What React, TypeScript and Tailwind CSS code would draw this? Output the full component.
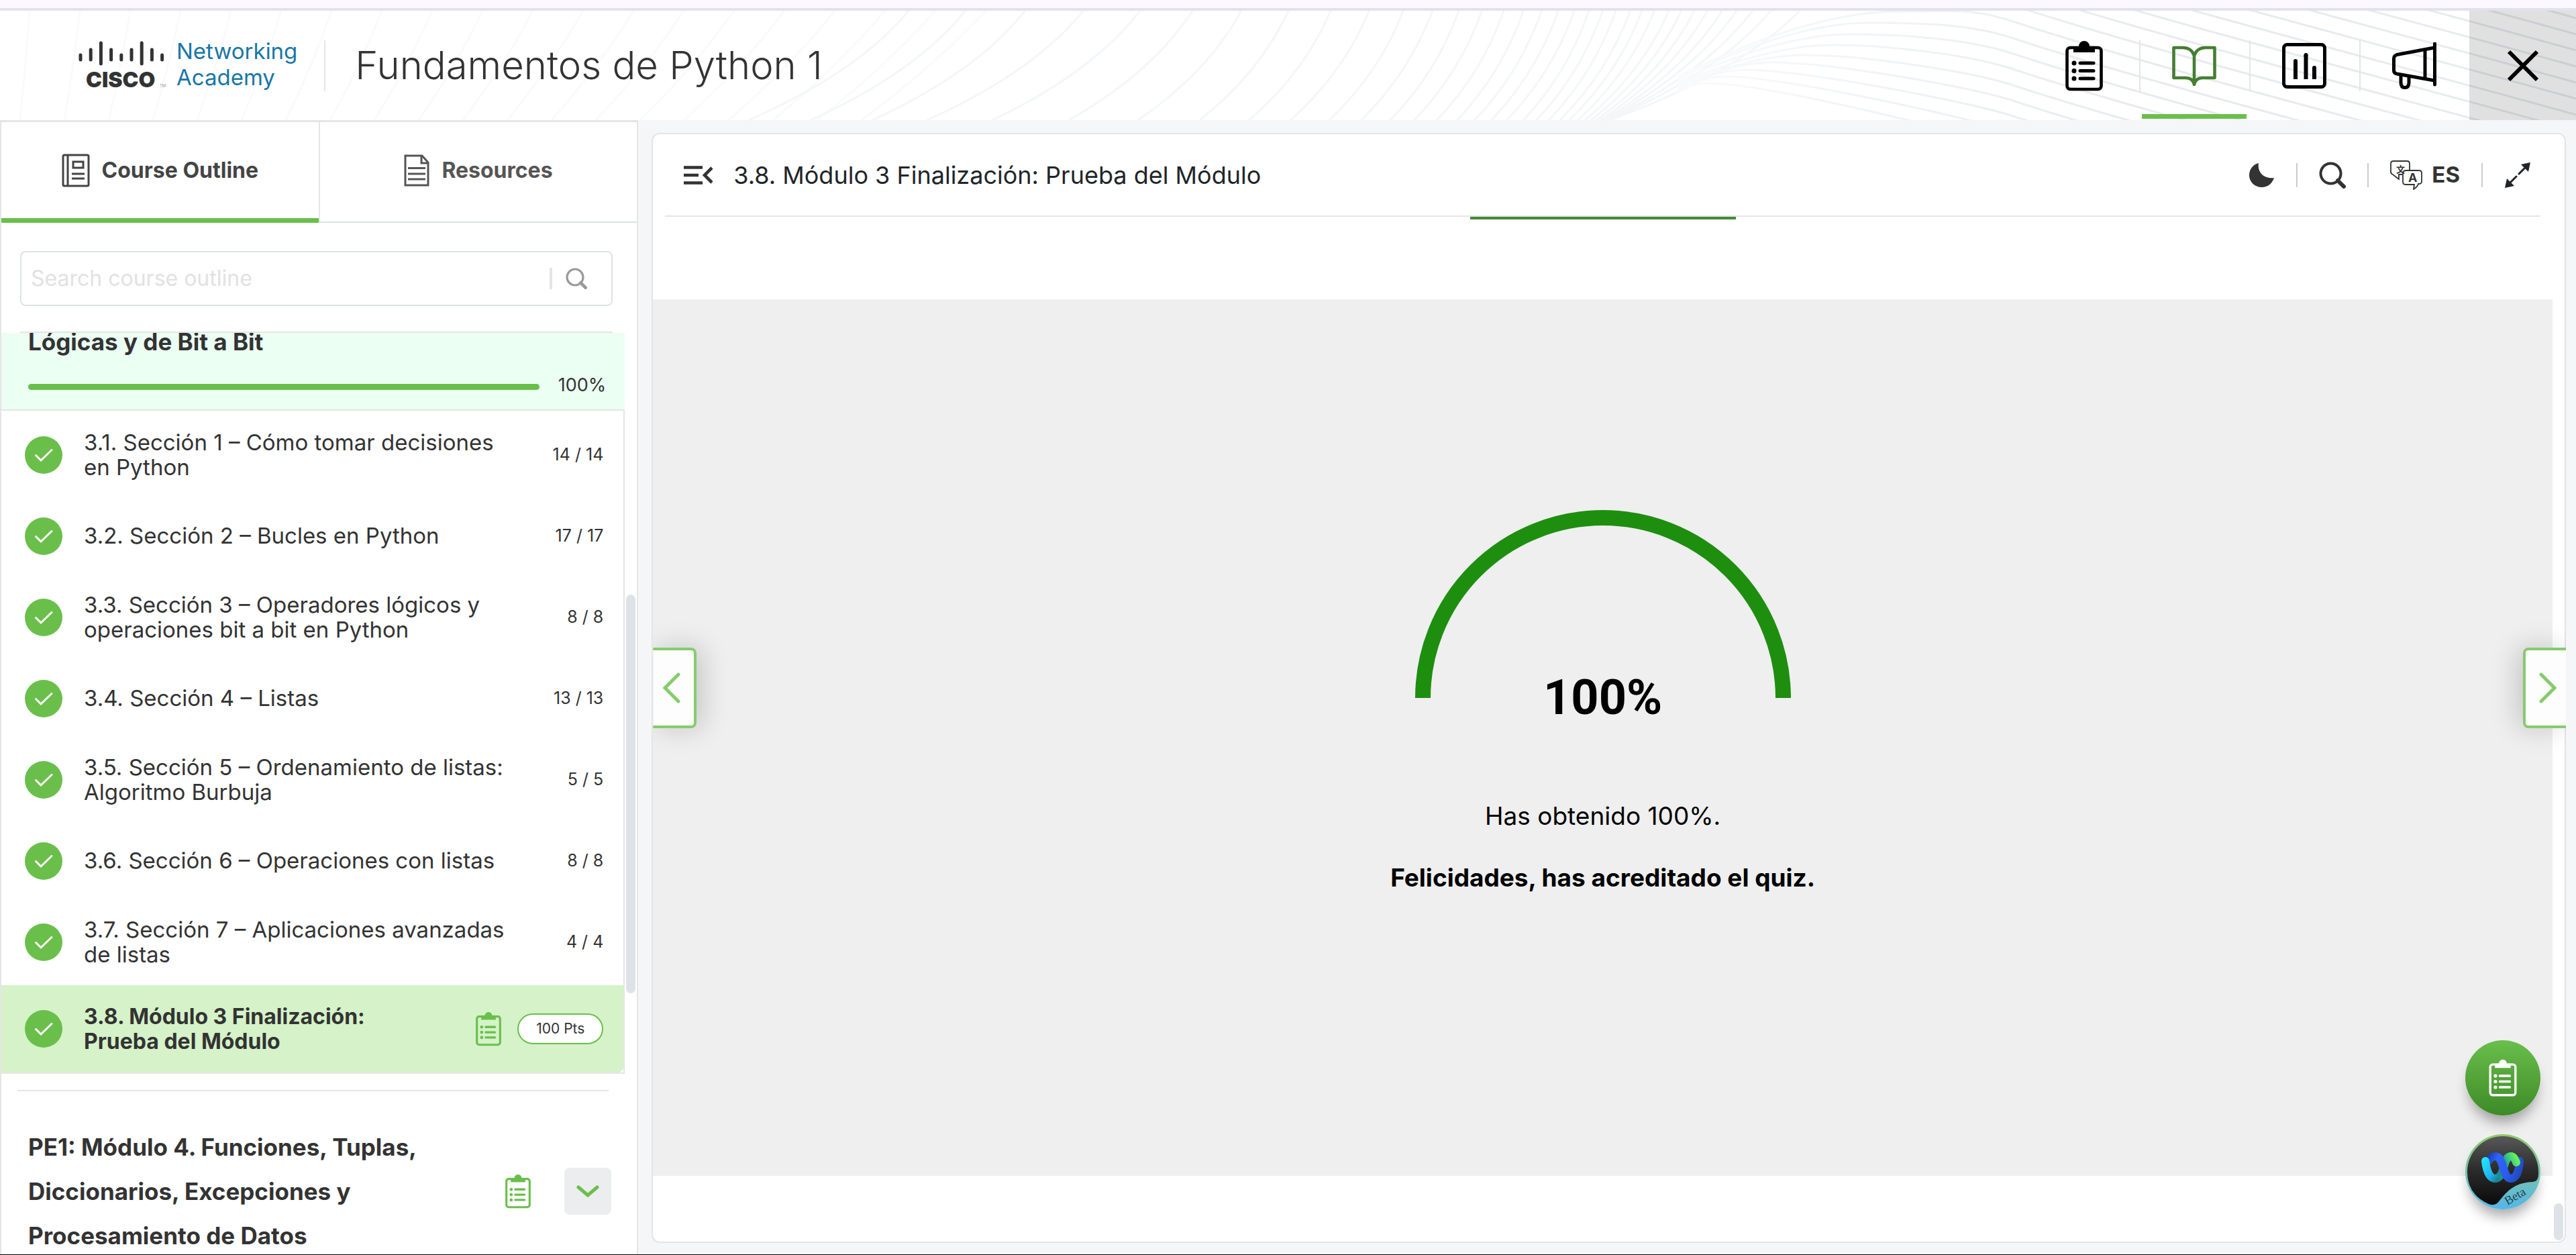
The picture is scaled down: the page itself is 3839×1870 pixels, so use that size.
import React from "react";

type IconProps = { className?: string };

function ClipboardIcon({ className }: IconProps) {
  return (
    <svg viewBox="0 0 56 76" className={className} fill="none" stroke="currentColor" aria-hidden="true">
      <rect x="2.5" y="11" width="51" height="62" rx="5" strokeWidth="4.6" />
      <path d="M12 9h8a8 8 0 0 1 16 0h8v9H12z" fill="currentColor" stroke="none" />
      <g strokeWidth="5" strokeLinecap="round">
        <path d="M22 34h20M22 45.500h20M22 57h20" />
      </g>
      <g fill="currentColor" stroke="none">
        <circle cx="13" cy="34" r="3.500" />
        <circle cx="13" cy="45.500" r="3.500" />
        <circle cx="13" cy="57" r="3.500" />
      </g>
    </svg>
  );
}

function BookIcon({ className }: IconProps) {
  return (
    <svg viewBox="0 0 66 60" className={className} fill="none" stroke="currentColor" strokeWidth="4.6" aria-hidden="true">
      <path d="M33 15Q29 3 16 3H2.500V48H20Q31 48 33 58Q35 48 46 48H63.500V3H50Q37 3 33 15V55" strokeLinejoin="round" />
    </svg>
  );
}

function ChartIcon({ className }: IconProps) {
  return (
    <svg viewBox="0 0 66 68" className={className} fill="none" stroke="currentColor" strokeWidth="5" aria-hidden="true">
      <rect x="2.500" y="2.500" width="61" height="63" rx="5" />
      <path d="M20 27V54M35.500 18V54M48 37V54" strokeWidth="6" />
      <path d="M20 27v1M35.500 18v1M48 37v1" strokeWidth="6" strokeLinecap="round" />
    </svg>
  );
}

function MegaphoneIcon({ className }: IconProps) {
  return (
    <svg viewBox="0 0 66 70" className={className} fill="none" stroke="currentColor" strokeWidth="5" aria-hidden="true">
      <path d="M63.500 2V63" strokeLinecap="round" />
      <path d="M63 8L7 18.500Q2.500 20 2.500 24V42Q2.500 46 7 47L63 57" />
      <path d="M49 11V54M13 48V60Q13 67.500 19 67.500Q25 67.500 25 60V50" />
    </svg>
  );
}

function CloseIcon({ className }: IconProps) {
  return (
    <svg viewBox="0 0 48 48" className={className} stroke="currentColor" strokeWidth="6" aria-hidden="true">
      <path d="M3 3L45 45M45 3L3 45" />
    </svg>
  );
}

function OutlineIcon({ className }: IconProps) {
  return (
    <svg viewBox="0 0 42 50" className={className} fill="none" stroke="currentColor" strokeWidth="3" aria-hidden="true">
      <rect x="2" y="2" width="38" height="46" rx="2" />
      <path d="M9 2V48" />
      <rect x="17" y="12" width="15" height="9" />
      <path d="M15 30H34M15 37H34" />
    </svg>
  );
}

function FileIcon({ className }: IconProps) {
  return (
    <svg viewBox="0 0 38 48" className={className} fill="none" stroke="currentColor" strokeWidth="3" aria-hidden="true">
      <path d="M2 2H27L36 12V46H2Z" />
      <path d="M26 2V13H36M6 20.500H32M6 29H32M6 37H32" />
    </svg>
  );
}

function SearchIcon({ className }: IconProps) {
  return (
    <svg viewBox="0 0 40 40" className={className} fill="none" stroke="currentColor" strokeWidth="4" aria-hidden="true">
      <circle cx="17.500" cy="17.500" r="15" />
      <path d="M28 28L37 37" strokeWidth="6" strokeLinecap="round" />
    </svg>
  );
}

function CollapseIcon({ className }: IconProps) {
  return (
    <svg viewBox="0 0 44 28" className={className} fill="none" stroke="currentColor" strokeWidth="4.600" aria-hidden="true">
      <path d="M0 2.500H28M0 14H22M0 25.500H28M42 3L31 14L42 25" />
    </svg>
  );
}

function MoonIcon({ className }: IconProps) {
  return (
    <svg viewBox="0 0 38 36" className={className} fill="currentColor" aria-hidden="true">
      <path d="M14 0C12 12 20 24 37 22C34 31 27 36 19 36C8 36 0 28 0 18C0 9 6 2 14 0Z" />
    </svg>
  );
}

function TranslateIcon({ className }: IconProps) {
  return (
    <svg viewBox="0 0 48 44" className={className} fill="none" stroke="currentColor" strokeWidth="1.800" aria-hidden="true">
      <path d="M18 21H13V28L4 21Q1 20 1 17V5Q1 1 5 1H25Q29 1 29 5V15" />
      <path d="M24 15H43Q47 15 47 19V31Q47 35 43 35H42Q41 39 35 43L36 36H23Q19 36 19 32V19Q19 15 24 15Z" />
      <text x="9" y="18" fontSize="13" fontWeight="700" fontFamily="'Noto Sans CJK SC', sans-serif" fill="currentColor" stroke="none">文</text>
      <text x="27" y="32" fontSize="18" fontFamily="Inter, sans-serif" fill="currentColor" stroke="none">A</text>
    </svg>
  );
}

function ExpandIcon({ className }: IconProps) {
  return (
    <svg viewBox="0 0 40 40" className={className} fill="currentColor" aria-hidden="true">
      <path d="M39 1L25 4L36 15ZM1 39L4 25L15 36Z" />
      <path d="M32 8L22 18M18 22L8 32" stroke="currentColor" strokeWidth="3" strokeLinecap="round" />
    </svg>
  );
}

function CheckBadge() {
  return (
    <svg viewBox="0 0 56 56" className="size-14 shrink-0" role="img" aria-label="Completed">
      <circle cx="28" cy="28" r="28" fill="#6abf4b" />
      <path d="M16.500 28.500L24 36L40 20.500" fill="none" stroke="#fff" strokeWidth="3" strokeLinecap="round" />
    </svg>
  );
}

function CiscoLogo() {
  const bars = [0, 1, 2, 1, 0, 1, 2, 1, 0];
  const spans = [
    [20, 29],
    [12, 29],
    [2, 35],
  ];
  return (
    <svg viewBox="0 0 132 76" className="h-[76px] w-[132px] shrink-0" role="img" aria-label="Cisco">
      <g stroke="#333" strokeWidth="5" strokeLinecap="round">
        {bars.map((b, i) => (
          <line key={i} x1={3 + i * 15.2} x2={3 + i * 15.2} y1={spans[b][0] + 2} y2={spans[b][1]} />
        ))}
      </g>
      <text x="11" y="70" fontSize="32" fontWeight="900" fontFamily="Inter, sans-serif" fill="#333">CISCO</text>
      <text x="121" y="70" fontSize="6" fontFamily="Inter, sans-serif" fill="#999">TM</text>
    </svg>
  );
}

function WebexIcon() {
  return (
    <svg viewBox="0 0 112 112" className="size-28" aria-hidden="true">
      <defs>
        <linearGradient id="rim" x1="0" y1="0" x2="0" y2="1">
          <stop offset="0" stopColor="#8fcb6b" />
          <stop offset="0.600" stopColor="#70c0b4" />
          <stop offset="1" stopColor="#54b6ea" />
        </linearGradient>
        <linearGradient id="disc" x1="0" y1="0" x2="0" y2="1">
          <stop offset="0" stopColor="#585858" />
          <stop offset="0.500" stopColor="#2b2b2b" />
          <stop offset="1" stopColor="#0a0a0a" />
        </linearGradient>
        <linearGradient id="cyan" gradientUnits="userSpaceOnUse" x1="28" y1="36" x2="58" y2="60">
          <stop offset="0" stopColor="#24e4fb" />
          <stop offset="0.600" stopColor="#1fb4f2" />
          <stop offset="1" stopColor="#157a80" />
        </linearGradient>
        <linearGradient id="green" gradientUnits="userSpaceOnUse" x1="56" y1="50" x2="78" y2="40">
          <stop offset="0" stopColor="#1c7a72" />
          <stop offset="0.500" stopColor="#37bf90" />
          <stop offset="1" stopColor="#62f25a" />
        </linearGradient>
        <linearGradient id="blue" gradientUnits="userSpaceOnUse" x1="32" y1="36" x2="84" y2="60">
          <stop offset="0" stopColor="#1a3fa8" />
          <stop offset="0.250" stopColor="#2f63fb" />
          <stop offset="0.650" stopColor="#2a5cf0" />
          <stop offset="1" stopColor="#2048b8" />
        </linearGradient>
      </defs>
      <circle cx="56" cy="56" r="56" fill="url(#rim)" />
      <path d="M3 56A53 53 0 0 1 109 56Q110 70 101 71C76 72 64 82 51 99Q45 108 35 104Q3 90 3 56Z" fill="url(#disc)" />
      <g fill="none" strokeWidth="12" strokeLinecap="round">
        <path d="M68 66C76 66 80 56 81 40" stroke="url(#blue)" />
        <path d="M44 66C52 66 55 58 57 50C60 38 63 33 68 33" stroke="#1f8f8c" />
        <path d="M57 50C60 38 63 33 68 33C72 33 74 37 76 42" stroke="url(#green)" />
        <path d="M34 40C38 34 41 33 45 33C52 33 54 42 57 51C60 61 63 66 68 66" stroke="url(#blue)" />
        <path d="M30 40C32 57 37 66 45 66" stroke="url(#cyan)" />
      </g>
      <text x="63" y="106" transform="rotate(-31 63 106)" fontSize="18" fontFamily="'Liberation Serif', serif" fill="#26404a">Beta</text>
    </svg>
  );
}

const waveTops = [50, 128, 210, 290, 368, 440, 507, 572, 630, 683, 730, 770, 806, 838, 868, 895, 920, 943, 965, 985, 1004, 1022, 1042, 1058, 1075, 1095, 1112, 1130, 1148, 1168, 1188, 1210, 1235, 1275];
const waveFeet = [-170, -85, 0, 75, 165, 270, 365, 450, 518, 575, 628, 672, 712, 745, 776, 804, 828, 851, 872, 895, 913, 930, 945, 958, 970, 980, 988, 995, 1000, 1004, 1007, 1010, 1012, 1014];
const crests = [
  [2829, 1, 16],
  [2785, 18, 41],
  [2758, 35, 64],
  [2731, 51, 87],
  [2688, 66, 111],
  [2640, 77, 134],
  [2600, 88, 157],
  [2570, 98, 181],
  [2545, 108, 205],
];

function HeaderWaves() {
  const toX = (v: number) => 1300 + v / 0.9224;
  return (
    <svg viewBox="0 0 3839 163" preserveAspectRatio="xMaxYMid slice" className="absolute inset-0 size-full" fill="none" strokeWidth="3" aria-hidden="true">
      <defs>
        <linearGradient id="fade" gradientUnits="userSpaceOnUse" x1="2480" y1="0" x2="3200" y2="0">
          <stop offset="0" stopColor="#fafbfc" />
          <stop offset="0.600" stopColor="#eef1f5" />
          <stop offset="1" stopColor="#e7ebf1" />
        </linearGradient>
      </defs>
      <g stroke="#f9fafa">
        {Array.from({ length: 20 }, (_, i) => {
          const x = 30 + i * 66;
          const lean = 14 + i * 9;
          return <path key={i} d={`M${x + lean} 0Q${x + lean * 0.6} 80 ${x} 163`} />;
        })}
      </g>
      <g stroke="#f4f6f8">
        {waveTops.map((t, i) => {
          const a = toX(t);
          const b = toX(waveFeet[i]);
          return <path key={i} d={`M${a} 0Q${a - (a - b) * 0.32} 92 ${b} 163`} />;
        })}
      </g>
      <g stroke="url(#fade)">
        {crests.map(([px, py, y]) => (
          <path key={px} d={`M2500 ${98 + py * 0.2}Q${px - (px - 2500) * 0.4} ${py} ${px} ${py}C${px + 90} ${py} 2940 ${y - 20} 3000 ${y}C3200 ${y + 66} 3600 ${y + 168} 3839 ${y + 235}`} />
        ))}
        {Array.from({ length: 10 }, (_, i) => {
          const y = -8 - i * 24;
          return <path key={i} d={`M3000 ${y}C3200 ${y + 66} 3600 ${y + 168} 3839 ${y + 235}`} />;
        })}
      </g>
    </svg>
  );
}

const sections = [
  { title: "3.1. Sección 1 – Cómo tomar decisiones en Python", count: "14 / 14" },
  { title: "3.2. Sección 2 – Bucles en Python", count: "17 / 17" },
  { title: "3.3. Sección 3 – Operadores lógicos y operaciones bit a bit en Python", count: "8 / 8" },
  { title: "3.4. Sección 4 – Listas", count: "13 / 13" },
  { title: "3.5. Sección 5 – Ordenamiento de listas: Algoritmo Burbuja", count: "5 / 5" },
  { title: "3.6. Sección 6 – Operaciones con listas", count: "8 / 8" },
  { title: "3.7. Sección 7 – Aplicaciones avanzadas de listas", count: "4 / 4" },
];

function Header() {
  const nav = [
    { label: "Assignments", icon: <ClipboardIcon className="h-[76px] w-14" /> },
    { label: "Course", icon: <BookIcon className="h-[60px] w-[66px]" />, active: true },
    { label: "Grades", icon: <ChartIcon className="h-[68px] w-[66px]" /> },
    { label: "Announcements", icon: <MegaphoneIcon className="h-[70px] w-[66px]" /> },
  ];
  return (
    <header className="relative flex h-[163px] shrink-0 bg-white">
      <HeaderWaves />
      <div className="relative flex flex-1 items-center pl-[117px]">
        <a href="#home" className="flex items-center gap-3.5" aria-label="Cisco Networking Academy">
          <CiscoLogo />
          <span className="pb-1 text-[33px] leading-[39px] text-[#1a76a5]">
            Networking
            <br />
            Academy
          </span>
        </a>
        <span className="ml-10 h-[76px] w-0.5 bg-[#e5e5e5]" />
        <h1 className="ml-11 text-[58px] font-light text-[#333]">Fundamentos de Python 1</h1>
      </div>
      <nav className="relative flex">
        {nav.map((n, i) => (
          <button key={n.label} aria-label={n.label} className={n.active ? "relative flex w-[164px] items-center justify-center text-[#457f31]" : "relative flex w-[164px] items-center justify-center text-black"}>
            {i > 0 && <span className="absolute top-11 left-0 h-[76px] w-0.5 bg-[#e5e5e5]" />}
            {n.icon}
            {n.active && <span className="absolute inset-x-1 bottom-0.5 h-[7px] bg-[#6abf4b]" />}
          </button>
        ))}
        <button aria-label="Close" className="flex w-[159px] items-center justify-center bg-black/12 text-black">
          <CloseIcon className="size-12" />
        </button>
      </nav>
    </header>
  );
}

function Sidebar() {
  return (
    <aside className="flex w-[24.780%] shrink-0 flex-col border-x-2 border-t-[3px] border-[#e5e5e5] bg-white text-[#333]">
      <div role="tablist" className="flex h-[150px] shrink-0 text-[32px] font-bold">
        <button role="tab" aria-selected="true" className="flex flex-1 items-center justify-center gap-[18px] border-b-[7px] border-[#6abf4b] text-[#444]">
          <OutlineIcon className="h-[50px] w-[42px]" />
          Course Outline
        </button>
        <button role="tab" aria-selected="false" className="flex flex-1 items-center justify-center gap-[18px] border-b-2 border-l-2 border-b-[#dee2e6] border-l-[#e5e5e5] pb-[5px] text-[#555]">
          <FileIcon className="h-12 w-[38px]" />
          Resources
        </button>
      </div>
      <div className="mt-[42px] mr-9 ml-7 shrink-0 border-b-2 border-[#e5e5e5] pb-[38px]">
        <label className="flex h-[82px] items-center rounded-lg border-2 border-[#dee2e6] pr-9 pl-3.5">
          <input type="text" aria-label="Search course outline" placeholder="Search course outline" className="min-w-0 flex-1 text-[32px] outline-none placeholder:text-[#e2e2e2]" />
          <span className="h-8 w-1 bg-[#e5e5e5]" />
          <SearchIcon className="ml-5 size-8 text-[#999]" />
        </label>
      </div>
      <div className="flex min-h-0 flex-1 overflow-hidden">
        <div className="min-w-0 flex-1">
          <section className="-mt-5 border-b-2 border-[#e5e5e5] bg-[#ebfff3] pr-7 pl-10">
            <h2 className="text-[35px] leading-[66px] font-bold">Lógicas y de Bit a Bit</h2>
            <div className="flex h-[68px] items-center gap-7">
              <div role="progressbar" aria-valuenow={100} aria-label="Module progress" className="h-[9px] flex-1 rounded-full bg-[#6abf4b]" />
              <span className="pb-1 text-[27px]">100%</span>
            </div>
          </section>
          <ul className="border-r-2 border-b-2 border-[#e5e5e5] pt-[5px]">
            {sections.map((s) => (
              <li key={s.title}>
                <a href="#section" className="flex h-[121px] items-center pr-7.5 pl-[35px]">
                  <CheckBadge />
                  <span className="ml-8 flex-1 text-[33px] leading-[37px]">{s.title}</span>
                  <span className="w-32 text-right text-[25px]">{s.count}</span>
                </a>
              </li>
            ))}
            <li className="mt-1">
              <a href="#section" className="flex h-[130px] items-center rounded-br-lg bg-[#d5f2c8] pr-7.5 pl-[35px]">
                <CheckBadge />
                <span className="mr-20 ml-8 flex-1 text-[32px] leading-[37px] font-bold">3.8. Módulo 3 Finalización: Prueba del Módulo</span>
                <ClipboardIcon className="h-[52px] w-[38px] shrink-0 text-[#6abf4b]" />
                <span className="ml-6 flex h-[46px] w-32 items-center justify-center rounded-full border-2 border-[#6abf4b] bg-white text-[21px]">100 Pts</span>
              </a>
            </li>
          </ul>
          <hr className="mx-6 mt-6 border-t-2 border-[#e5e5e5]" />
          <section className="mt-[50px] flex items-center pr-5 pl-10">
            <h2 className="flex-1 text-[35px] leading-[66px] font-bold">PE1: Módulo 4. Funciones, Tuplas, Diccionarios, Excepciones y Procesamiento de Datos</h2>
            <ClipboardIcon className="h-[52px] w-[38px] shrink-0 text-[#6abf4b]" />
            <button aria-label="Expand module" className="ml-[50px] flex size-[70px] shrink-0 items-center justify-center rounded-lg bg-[#ebedef] text-[#6abf4b]">
              <svg viewBox="0 0 34 18" className="h-[18px] w-[34px]" fill="none" stroke="currentColor" strokeWidth="5" strokeLinecap="round" aria-hidden="true">
                <path d="M3 3L17 15L31 3" />
              </svg>
            </button>
          </section>
        </div>
        <div className="w-[18px] shrink-0 pt-[390px] pl-0.5">
          <div className="h-[594px] w-3.5 rounded-full bg-[#dee2e8]" />
        </div>
      </div>
    </aside>
  );
}

function Viewer() {
  return (
    <main className="flex min-w-0 flex-1 bg-[#f5f6f8] pt-[19px] pr-[15px] pb-[17px] pl-5">
      <div className="relative flex min-w-0 flex-1 flex-col rounded-xl border-2 border-[#e5e5e5] bg-white">
        <div className="mr-9 ml-[18px] flex h-[123px] shrink-0 items-center border-b-2 border-[#e5e5e5] pr-3.5 pl-7 text-[#333]">
          <button aria-label="Collapse outline">
            <CollapseIcon className="h-7 w-11" />
          </button>
          <h2 className="ml-7.5 flex-1 text-4xl text-[#212529]">3.8. Módulo 3 Finalización: Prueba del Módulo</h2>
          <div className="flex items-center gap-8">
            <button aria-label="Dark mode"><MoonIcon className="h-9 w-[38px]" /></button>
            <span className="h-9 w-0.5 bg-[#ccc]" />
            <button aria-label="Search"><SearchIcon className="size-10" /></button>
            <span className="h-9 w-0.5 bg-[#ccc]" />
            <button className="flex items-center gap-3.5 text-[33px] font-bold">
              <TranslateIcon className="h-11 w-12" />
              ES
            </button>
            <span className="h-9 w-0.5 bg-[#ccc]" />
            <button aria-label="Full screen" className="text-[#212529]"><ExpandIcon className="size-10" /></button>
          </div>
        </div>
        <div className="flex min-h-0 flex-1">
          <div className="flex min-w-0 flex-1 flex-col">
            <div className="flex h-[123px] shrink-0 justify-center">
              <span className="h-1 w-[396px] bg-[#458a38]" />
            </div>
            <div className="flex flex-1 flex-col items-center bg-[#efefef] pt-[314px] text-[37px] leading-[56px] text-black">
              <svg viewBox="0 0 560 280" className="h-[280px] w-[560px] shrink-0" fill="none" stroke="#1e8e0f" strokeWidth="23" aria-hidden="true">
                <path d="M11.500 280A268.500 268.500 0 0 1 548.500 280" />
              </svg>
              <p className="relative -mt-9 font-[Roboto] text-7xl leading-none font-bold">100%</p>
              <p className="mt-28">Has obtenido 100%.</p>
              <p className="mt-9 font-bold">Felicidades, has acreditado el quiz.</p>
            </div>
            <div className="h-[98px] shrink-0" />
          </div>
          <div className="flex w-[18px] shrink-0 flex-col justify-end pb-0.5 pl-0.5">
            <div className="h-[55px] w-3.5 rounded-full bg-[#dee2e6]" />
          </div>
        </div>
        <button aria-label="Previous" className="absolute top-1/2 left-0 flex h-[120px] w-[65px] -translate-y-1/2 items-center justify-center rounded-r-lg border-4 border-l-0 border-[#86cb6c] bg-[#fdfdfd] pr-1.5 text-[#86cb6c] shadow-[8px_0_40px_rgba(0,0,0,0.18)] [clip-path:inset(-60px_-60px_-60px_0)]">
          <svg viewBox="0 0 26 46" className="h-[46px] w-[26px]" fill="none" stroke="currentColor" strokeWidth="5" strokeLinecap="round" aria-hidden="true">
            <path d="M23 3L3 23L23 43" />
          </svg>
        </button>
        <button aria-label="Next" className="absolute top-1/2 -right-0.5 flex h-[120px] w-16 -translate-y-1/2 items-center justify-center rounded-l-lg border-4 border-r-0 border-[#86cb6c] bg-[#fdfdfd] pl-1.5 text-[#86cb6c] shadow-[-8px_0_40px_rgba(0,0,0,0.18)] [clip-path:inset(-60px_0_-60px_-60px)]">
          <svg viewBox="0 0 26 46" className="h-[46px] w-[26px]" fill="none" stroke="currentColor" strokeWidth="5" strokeLinecap="round" aria-hidden="true">
            <path d="M3 3L23 23L3 43" />
          </svg>
        </button>
        <div className="absolute right-9 bottom-12 flex flex-col gap-7">
          <button aria-label="Assignments" className="flex size-28 items-center justify-center rounded-full bg-linear-to-b from-[#6abf4b] to-[#3d8a27] text-white shadow-[0_16px_20px_-6px_rgba(0,0,0,0.35)]">
            <ClipboardIcon className="h-14 w-[42px]" />
          </button>
          <button aria-label="Webex Beta" className="size-28 rounded-full shadow-[0_16px_20px_-6px_rgba(0,0,0,0.35)]">
            <WebexIcon />
          </button>
        </div>
      </div>
    </main>
  );
}

export default function App() {
  return (
    <div className="flex h-screen flex-col overflow-hidden border-b border-black bg-white font-['Inter',sans-serif]">
      <div className="h-4 shrink-0 border-b-4 border-[#e3e1ee] bg-[#fbf9ff]" />
      <Header />
      <div className="flex min-h-0 flex-1">
        <Sidebar />
        <Viewer />
      </div>
    </div>
  );
}
